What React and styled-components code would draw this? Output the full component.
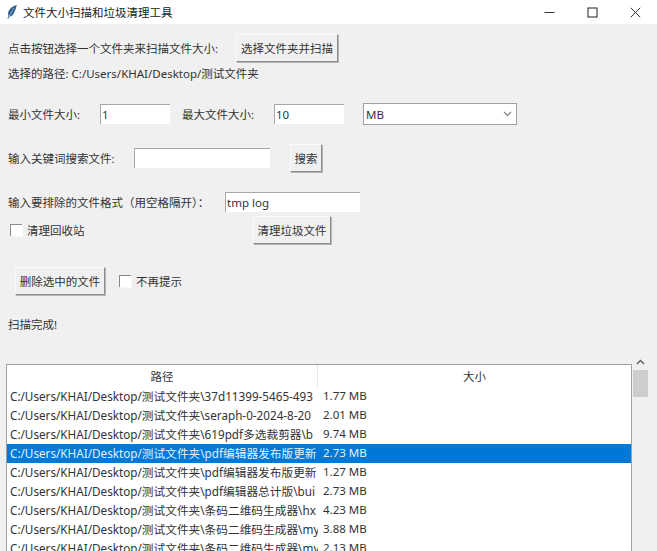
import React from "react";
import styled, { createGlobalStyle } from "styled-components";

const root = "C:/Users/KHAI/Desktop/测试文件夹\\";

const files = [
  { path: root + "37d11399-5465-493", size: "1.77 MB" },
  { path: root + "seraph-0-2024-8-20", size: "2.01 MB" },
  { path: root + "619pdf多选裁剪器\\b", size: "9.74 MB" },
  { path: root + "pdf编辑器发布版更新", size: "2.73 MB", selected: true },
  { path: root + "pdf编辑器发布版更新", size: "1.27 MB" },
  { path: root + "pdf编辑器总计版\\bui", size: "2.73 MB" },
  { path: root + "条码二维码生成器\\hx", size: "4.23 MB" },
  { path: root + "条码二维码生成器\\my", size: "3.88 MB" },
  { path: root + "条码二维码生成器\\my", size: "2.13 MB" },
];

const GlobalStyle = createGlobalStyle`
  html, body {
    margin: 0;
    height: 100%;
    overflow: hidden;
    background: #f0f0f0;
  }
  body {
    font-family: "Noto Sans", "Noto Sans CJK SC", sans-serif;
    font-size: 11.5px;
    color: #333;
  }
`;

const Window = styled.div`
  width: 657px;
  height: 551px;
  overflow: hidden;
  display: flex;
  flex-direction: column;
`;

const TitleBar = styled.div`
  height: 24px;
  flex: none;
  background: #fff;
  display: flex;
  align-items: center;
  padding-left: 7px;
`;

const TitleText = styled.span`
  margin-left: 6px;
  color: #222;
`;

const WindowControls = styled.div`
  margin-left: auto;
  display: flex;
  height: 100%;
`;

const ControlButton = styled.div`
  width: 43px;
  display: flex;
  align-items: center;
  justify-content: center;
  color: #333;
`;

const Form = styled.div`
  display: flex;
  flex-direction: column;
  padding: 10px 0 0 8px;
`;

const Row = styled.div`
  display: flex;
  align-items: center;
  height: ${(p) => p.$height || 28}px;
  margin-top: ${(p) => p.$top || 0}px;
  padding-left: ${(p) => p.$indent || 0}px;
`;

const Label = styled.span`
  white-space: nowrap;
  width: ${(p) => (p.$width ? `${p.$width}px` : "auto")};
  flex: none;
`;

const Button = styled.button`
  font: inherit;
  color: #333;
  height: 28px;
  width: ${(p) => p.$width}px;
  margin-right: ${(p) => p.$after || 0}px;
  flex: none;
  padding: 0;
  background: #f0f0f0;
  border: 1px solid;
  border-color: #fafafa #8f8f8f #8f8f8f #fafafa;
  box-shadow: 1px 1px 0 #b5b5b5;
`;

const TextInput = styled.input`
  font: inherit;
  color: #333;
  box-sizing: border-box;
  width: ${(p) => p.$width}px;
  height: 20px;
  flex: none;
  margin: 0 ${(p) => p.$after || 0}px 0 0;
  padding: 0 1px;
  background: #fff;
  border: none;
  border-top: 1px solid #a8a8a8;
  border-left: 1px solid #a8a8a8;
  outline: none;
`;

const Select = styled.div`
  box-sizing: border-box;
  width: 154px;
  height: 22px;
  flex: none;
  background: #fff;
  border: 1px solid #a0a0a0;
  display: flex;
  align-items: center;
  justify-content: space-between;
  padding: 0 4px 0 2px;
  color: #333;

  svg {
    color: #8a8a8a;
  }
`;

const CheckBox = styled.span`
  box-sizing: border-box;
  display: block;
  width: 12px;
  height: 12px;
  flex: none;
  background: #fff;
  border-top: 1px solid #8a8a8a;
  border-left: 1px solid #8a8a8a;
  box-shadow: 1px 1px 0 #f8f8f8;
  margin-left: ${(p) => p.$left || 0}px;
  margin-right: 5px;
`;

const ListArea = styled.div`
  display: flex;
  margin-top: 21px;
  padding-left: 6px;
`;

const Table = styled.div`
  box-sizing: border-box;
  width: 626px;
  margin-top: 10px;
  background: #fff;
  border: 1px solid #a0a0a0;
  border-bottom: none;
`;

const HeaderRow = styled.div`
  display: grid;
  grid-template-columns: 310px 1fr;
  height: 22px;
`;

const HeaderCell = styled.div`
  display: flex;
  align-items: center;
  justify-content: center;
  color: #333;

  & + & {
    border-left: 1px solid #e6e6e6;
  }
`;

const BodyRow = styled.div`
  display: grid;
  grid-template-columns: 308px 1fr;
  column-gap: 5px;
  height: 19px;
  line-height: 18px;
  padding-left: 3px;
  background: ${(p) => (p.$selected ? "#0078d7" : "#fff")};
  color: ${(p) => (p.$selected ? "#e3f0fb" : "#333")};
`;

const Cell = styled.div`
  overflow: hidden;
  white-space: nowrap;
`;

const PathCell = styled(Cell)`
  font-size: 11.7px;
`;

const ScrollBar = styled.div`
  width: 15px;
  margin-left: 1px;
  flex: none;
  display: flex;
  flex-direction: column;
`;

const ScrollArrow = styled.div`
  height: 16px;
  display: flex;
  align-items: center;
  justify-content: center;
  color: #555;
`;

const ScrollThumb = styled.div`
  height: 27px;
  background: #cdcdcd;
`;

const Feather = () => (
  <svg width="10" height="14" viewBox="0 0 10 14">
    <path
      d="M9.700 0C6 .8 2.800 3.200 1.500 6.600.9 8.400 1 9.900 1.500 11L.4 13.600l.8.400 1.100-2.400c1.700 0 3.300-1.200 4.400-3.200C8 6.200 9.300 3.200 9.700 0z"
      fill="#2d5f8e"
    />
    <path d="M2 11.400 7 3" stroke="#d5e2ee" strokeWidth="0.6" fill="none" />
  </svg>
);

const Chevron = ({ up }) => (
  <svg width="9" height="6" viewBox="0 0 9 6">
    <path
      d={up ? "M1 5l3.500-3.500L8 5" : "M1 1l3.500 3.500L8 1"}
      fill="none"
      stroke="currentColor"
      strokeWidth="1.300"
    />
  </svg>
);

export default function App() {
  return (
    <Window>
      <GlobalStyle />
      <TitleBar>
        <Feather />
        <TitleText>文件大小扫描和垃圾清理工具</TitleText>
        <WindowControls>
          <ControlButton>
            <svg width="11" height="11" viewBox="0 0 11 11">
              <path d="M0.500 5.500h10" stroke="currentColor" fill="none" />
            </svg>
          </ControlButton>
          <ControlButton>
            <svg width="11" height="11" viewBox="0 0 11 11">
              <rect x="1" y="1" width="9" height="9" stroke="currentColor" strokeWidth="1.100" fill="none" />
            </svg>
          </ControlButton>
          <ControlButton>
            <svg width="11" height="11" viewBox="0 0 11 11">
              <path d="M0.800 0.800l9.400 9.400M10.200 0.800l-9.400 9.400" stroke="currentColor" fill="none" />
            </svg>
          </ControlButton>
        </WindowControls>
      </TitleBar>

      <Form>
        <Row>
          <Label $width={228}>点击按钮选择一个文件夹来扫描文件大小:</Label>
          <Button $width={102}>选择文件夹并扫描</Button>
        </Row>
        <Row $height={18} $top={2}>
          <Label>选择的路径: C:/Users/KHAI/Desktop/测试文件夹</Label>
        </Row>
        <Row $height={22} $top={21}>
          <Label $width={92}>最小文件大小:</Label>
          <TextInput $width={70} $after={12} value="1" readOnly />
          <Label $width={92}>最大文件大小:</Label>
          <TextInput $width={70} $after={19} value="10" readOnly />
          <Select>
            MB
            <Chevron />
          </Select>
        </Row>
        <Row $top={19}>
          <Label $width={126}>输入关键词搜索文件:</Label>
          <TextInput $width={136} $after={20} readOnly />
          <Button $width={32}>搜索</Button>
        </Row>
        <Row $height={20} $top={20}>
          <Label $width={217}>输入要排除的文件格式（用空格隔开）：</Label>
          <TextInput $width={135} value="tmp log" readOnly />
        </Row>
        <Row $top={4}>
          <CheckBox $left={2} />
          <Label $width={226}>清理回收站</Label>
          <Button $width={78}>清理垃圾文件</Button>
        </Row>
        <Row $top={23} $indent={7}>
          <Button $width={90} $after={14}>删除选中的文件</Button>
          <CheckBox />
          <Label>不再提示</Label>
        </Row>
        <Row $height={18} $top={20}>
          <Label>扫描完成!</Label>
        </Row>
      </Form>

      <ListArea>
        <Table>
          <HeaderRow>
            <HeaderCell>路径</HeaderCell>
            <HeaderCell>大小</HeaderCell>
          </HeaderRow>
          {files.map((file) => (
            <BodyRow key={file.size + file.path} $selected={file.selected}>
              <PathCell>{file.path}</PathCell>
              <Cell>{file.size}</Cell>
            </BodyRow>
          ))}
        </Table>
        <ScrollBar>
          <ScrollArrow>
            <Chevron up />
          </ScrollArrow>
          <ScrollThumb />
        </ScrollBar>
      </ListArea>
    </Window>
  );
}
